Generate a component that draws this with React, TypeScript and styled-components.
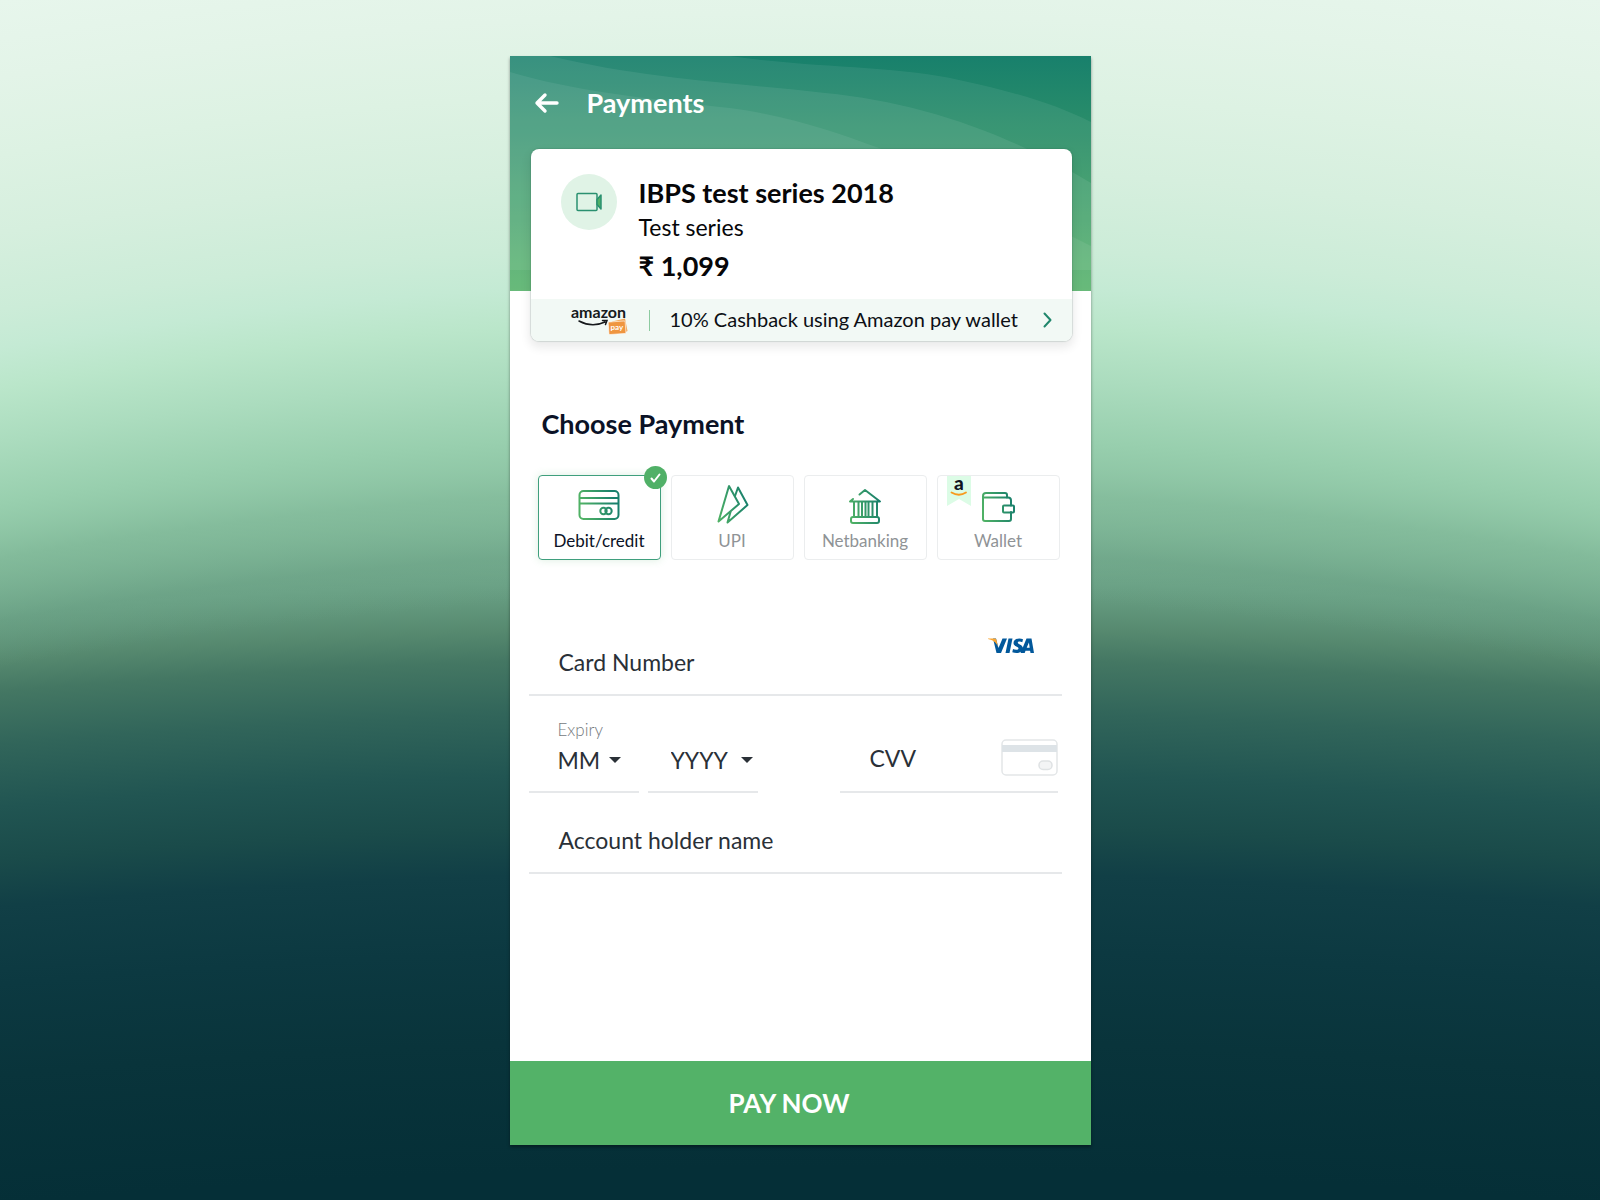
import React, { useState } from "react";
import styled, { createGlobalStyle, css } from "styled-components";

const GlobalStyle = createGlobalStyle`
  *, *::before, *::after { box-sizing: border-box; }
  body {
    margin: 0;
    font-family: "Lato", "Noto Sans", sans-serif;
    color: #0b1226;
  }
  button, input, select { font: inherit; color: inherit; }
`;

const Backdrop = styled.main`
  min-height: 100vh;
  display: flex;
  justify-content: center;
  align-items: flex-start;
  padding: 56px 24px;
  background:
    radial-gradient(
      circle 5100px at 50% 5000px,
      rgba(86, 137, 111, 0) 4406px,
      rgba(107, 162, 134, 0.4) 4452px,
      rgba(131, 187, 155, 0.75) 4513px,
      #98cfae 4567px,
      #abdcbe 4628px,
      #bae6ca 4681px,
      #c4ead4 4720px,
      #ccecd8 4758px,
      #d6efde 4834px,
      #ddf2e3 4911px,
      #e3f4e8 4987px,
      #e7f6ec 5064px
    ),
    radial-gradient(
      circle 10100px at 50% 10000px,
      #052f37 8832px,
      #09343b 8961px,
      #0c3941 9052px,
      #113f46 9129px,
      #1a4b4a 9175px,
      #215552 9228px,
      #31655a 9290px,
      #447763 9343px,
      #56896f 9374px,
      #6ba286 9420px,
      #83bb9b 9481px,
      #98cfae 9535px
    );
`;

const Phone = styled.form`
  width: 100%;
  max-width: 581px;
  min-height: calc(100vh - 111px);
  display: flex;
  flex-direction: column;
  background: #fff;
  box-shadow: 0 2px 3px rgba(0, 0, 0, 0.4);
`;

const Header = styled.header`
  position: relative;
  height: 235px;
  padding: 31px 24px;
  color: #fff;
  background: linear-gradient(#18806c, #2f9169 38%, #50b065);
`;

const Waves = styled.svg`
  position: absolute;
  inset: 0;
  width: 100%;
  height: 100%;
`;

const TitleBar = styled.div`
  position: relative;
  display: flex;
  align-items: center;
  gap: 27px;
`;

const IconButton = styled.button`
  display: flex;
  padding: 0;
  border: 0;
  background: none;
  cursor: pointer;
`;

const PageTitle = styled.h1`
  margin: 0;
  font-size: 27px;
  line-height: 32px;
  font-weight: 700;
`;

const OrderCard = styled.section`
  position: relative;
  margin: -142px 19px 0 21px;
  overflow: hidden;
  border-radius: 8px;
  background: #fff;
  box-shadow: 0 0 1px 1px rgba(40, 90, 70, 0.15), 0 5px 10px 2px rgba(0, 0, 0, 0.08);
`;

const OrderBody = styled.div`
  display: flex;
  align-items: flex-start;
  gap: 22px;
  height: 150px;
  padding: 25px 30px 0;
`;

const Avatar = styled.div`
  display: grid;
  place-items: center;
  width: 56px;
  height: 56px;
  border-radius: 50%;
  background: #e0f3e6;
`;

const OrderText = styled.div`
  padding-top: 2px;
  color: #060608;
`;

const OrderName = styled.h2`
  margin: 0;
  font-size: 27px;
  line-height: 34px;
  font-weight: 700;
`;

const OrderKind = styled.p`
  margin: 0;
  font-size: 23px;
  line-height: 34px;
`;

const Price = styled.p`
  margin: 0;
  font-size: 27px;
  line-height: 44px;
  font-weight: 700;
`;

const Offer = styled.a`
  display: flex;
  align-items: center;
  height: 42px;
  padding: 0 20px 0 40px;
  background: #f2f9f5;
  color: #0c0f14;
  font-size: 20px;
  line-height: 28px;
  text-decoration: none;
`;

const PartnerLogo = styled.svg`
  flex: none;
  overflow: visible;
`;

const OfferDivider = styled.span`
  width: 1px;
  height: 21px;
  margin: 0 20px 0 21px;
  background: #8ccba0;
`;

const OfferText = styled.span`
  flex: 1;
  padding-bottom: 2px;
`;

const SectionTitle = styled.legend`
  padding: 0 4px;
  font-size: 27px;
  line-height: 34px;
  font-weight: 700;
`;

const Methods = styled.fieldset`
  margin: 66px 31px 0 28px;
  padding: 0;
  border: 0;
`;

const MethodGrid = styled.div`
  display: grid;
  grid-template-columns: repeat(4, 1fr);
  gap: 10px;
  padding-top: 34px;
`;

const Method = styled.label<{ $active: boolean }>`
  position: relative;
  display: flex;
  flex-direction: column;
  align-items: center;
  height: 85px;
  padding-top: 8px;
  border: 1px solid #ebedee;
  border-radius: 4px;
  color: #8f9396;
  font-size: 17px;
  line-height: 26px;
  cursor: pointer;
  ${(p) =>
    p.$active &&
    css`
      border-color: #3f9f7d;
      color: #0b1226;
      box-shadow: 0 0 8px rgba(80, 176, 101, 0.2);
    `}
`;

const HiddenRadio = styled.input`
  position: absolute;
  inset: 0;
  margin: 0;
  opacity: 0;
  cursor: pointer;
`;

const MethodIcon = styled.svg`
  width: 44px;
  height: 44px;
  fill: none;
  stroke: url(#brand);
  stroke-width: 2;
  stroke-linecap: round;
  stroke-linejoin: round;
`;

const CheckBadge = styled.span`
  position: absolute;
  top: -10px;
  right: -7px;
  display: grid;
  place-items: center;
  width: 23px;
  height: 23px;
  border-radius: 50%;
  background: #50b067;
`;

const Ribbon = styled.svg`
  position: absolute;
  top: 0;
  left: 9px;
  overflow: visible;
`;

const Fields = styled.div`
  display: flex;
  flex-direction: column;
  margin: 55px 29px 0 19px;
  color: #2a3037;
  font-size: 23px;
  line-height: 32px;
`;

const TextField = styled.label`
  display: flex;
  align-items: flex-end;
  gap: 12px;
  height: 81px;
  padding: 0 28px 16px 30px;
  border-bottom: 2px solid #e6e8ea;
`;

const TextInput = styled.input`
  flex: 1;
  min-width: 0;
  height: 32px;
  padding: 0;
  border: 0;
  outline: 0;
  background: none;
`;

const BrandMark = styled.svg`
  flex: none;
  margin-bottom: 24px;
`;

const SplitRow = styled.div`
  display: flex;
  justify-content: space-between;
  align-items: flex-end;
  height: 97px;
  padding-right: 4px;
`;

const Expiry = styled.div`
  display: grid;
  grid-template-columns: 110px 110px;
  column-gap: 9px;
`;

const SmallLabel = styled.label`
  grid-column: 1 / -1;
  padding-left: 29px;
  color: #74797d;
  font-size: 17px;
  line-height: 24px;
  font-weight: 300;
`;

const SelectBox = styled.div<{ $indent: number }>`
  display: flex;
  align-items: center;
  height: 51px;
  padding: 0 0 14px ${(p) => p.$indent}px;
  border-bottom: 2px solid #e6e8ea;
`;

const Select = styled.select<{ $width: number }>`
  appearance: none;
  width: ${(p) => p.$width}px;
  height: 32px;
  padding: 0;
  border: 0;
  background: none;
  cursor: pointer;
`;

const Caret = styled.span`
  border: 6px solid transparent;
  border-top-color: #2a3037;
  border-bottom: 0;
  pointer-events: none;
`;

const CvvField = styled.label`
  display: flex;
  align-items: center;
  gap: 12px;
  width: 218px;
  height: 58px;
  padding: 0 0 10px 30px;
  border-bottom: 2px solid #e6e8ea;
`;

const PayButton = styled.button`
  height: 84px;
  margin-top: auto;
  padding: 0 22px 0 0;
  border: 0;
  background: #53b268;
  color: #fff;
  font-size: 26px;
  line-height: 32px;
  font-weight: 700;
  cursor: pointer;
`;

const methods = [
  {
    id: "card",
    name: "Debit/credit",
    icon: (
      <>
        <rect x="2.5" y="7" width="39" height="28" rx="4" />
        <path d="M3 14h38M3 19.5h38" />
        <circle cx="26.5" cy="27" r="3.2" />
        <circle cx="31.5" cy="27" r="3.2" />
      </>
    ),
  },
  {
    id: "upi",
    name: "UPI",
    icon: (
      <>
        <path d="M19 2 8.5 37.5 29 20Z" />
        <path d="M25 12 28 3.500 37.500 21 17.500 38.500 20.500 28" />
      </>
    ),
  },
  {
    id: "bank",
    name: "Netbanking",
    icon: (
      <>
        <path d="M16.5 10.5 22 6 37 17.500H7L10 15" />
        <path d="M11 18v14M15.500 18v14M19 18v14M22.500 18v14M25.500 18v14M29.500 18v14M34 18v14" />
        <rect x="8" y="33" width="28" height="6" rx="2" />
      </>
    ),
  },
  {
    id: "wallet",
    name: "Wallet",
    icon: (
      <>
        <path d="M35 28V35a2 2 0 0 1-2 2H9a2 2 0 0 1-2-2V12a3 3 0 0 1 3-3h19a2 2 0 0 1 2 2v2.500" />
        <path d="M7 13.500h25a3 3 0 0 1 3 3v5" />
        <rect x="27" y="21.500" width="11" height="7" rx="1" />
      </>
    ),
  },
];

export default function App() {
  const [method, setMethod] = useState("card");

  return (
    <>
      <GlobalStyle />
      <Backdrop>
        <Phone onSubmit={(e) => e.preventDefault()}>
          <Header>
            <Waves viewBox="0 0 581 235" preserveAspectRatio="none" aria-hidden="true">
              <path fill="#fff" fillOpacity=".07" d="M220 0C300 12 390 10 449 24C505 36 545 48 581 66V235H0V0Z" />
              <path fill="#fff" fillOpacity=".08" d="M40 0C140 24 230 27 315 37C410 46 500 78 581 127V235H0V0Z" />
              <path fill="#fff" fillOpacity=".07" d="M0 16C60 34 130 42 220 52C280 60 325 76 369 92C450 124 520 160 581 190V214H0Z" />
            </Waves>
            <TitleBar>
              <IconButton type="button" aria-label="Back">
                <svg width="26" height="24" viewBox="0 0 26 24" fill="none" stroke="#fff" strokeWidth="3.4" strokeLinecap="round" strokeLinejoin="round">
                  <path d="M23 12H3M11 4 3 12l8 8" />
                </svg>
              </IconButton>
              <PageTitle>Payments</PageTitle>
            </TitleBar>
          </Header>

          <OrderCard>
            <OrderBody>
              <Avatar>
                <svg width="26" height="20" viewBox="0 0 26 20" fill="none" stroke="#2a9070" strokeWidth="1.5" strokeLinejoin="round">
                  <rect x="1" y="1.5" width="20" height="17" rx="1" />
                  <path fill="#50b067" d="M21 7.5 25 3v14l-4-4.5Z" />
                </svg>
              </Avatar>
              <OrderText>
                <OrderName>IBPS test series 2018</OrderName>
                <OrderKind>Test series</OrderKind>
                <Price>₹ 1,099</Price>
              </OrderText>
            </OrderBody>
            <Offer href="#offer">
              <PartnerLogo width="57" height="32" viewBox="0 0 57 32" role="img" aria-label="amazon pay">
                <text x="0" y="14" fill="#16191c" fontFamily="Lato, sans-serif" fontSize="16" fontWeight="700">amazon</text>
                <path fill="none" stroke="#16191c" strokeWidth="1.5" strokeLinecap="round" d="M8 17Q21 24 34 18M31.5 16.5h4.500l-1.500 4" />
                <path fill="#f2a75a" d="M41 17.500 54 14.500 56.500 27 53 29Z" />
                <rect x="37.5" y="17.5" width="17" height="12.500" rx="1" fill="#ef9540" stroke="#fff" strokeWidth=".6" transform="rotate(-4 46 23)" />
                <text x="39.5" y="26" fill="#fff" fontFamily="Lato, sans-serif" fontSize="8" fontWeight="700">pay</text>
              </PartnerLogo>
              <OfferDivider />
              <OfferText>10% Cashback using Amazon pay wallet</OfferText>
              <svg width="9" height="16" viewBox="0 0 9 16" fill="none" stroke="#21876c" strokeWidth="2" strokeLinecap="round" strokeLinejoin="round" aria-hidden="true">
                <path d="m1.5 1.5 6 6.5-6 6.5" />
              </svg>
            </Offer>
          </OrderCard>

          <Methods>
            <SectionTitle>Choose Payment</SectionTitle>
            <MethodGrid>
              {methods.map((m) => (
                <Method key={m.id} $active={m.id === method}>
                  <HiddenRadio type="radio" name="method" checked={m.id === method} onChange={() => setMethod(m.id)} />
                  {m.id === "wallet" && (
                    <Ribbon width="24" height="30" viewBox="0 0 24 30" aria-hidden="true">
                      <path fill="#dcfce6" d="M0 0h24v30l-12-7L0 30Z" />
                      <text x="7" y="14" fill="#101522" fontFamily="Lato, sans-serif" fontSize="19" fontWeight="900">a</text>
                      <path fill="none" stroke="#f79a1e" strokeWidth="1.8" strokeLinecap="round" d="M4.5 16.5Q12 21 19 16.5" />
                    </Ribbon>
                  )}
                  <MethodIcon viewBox="0 0 44 44" aria-hidden="true">
                    <defs>
                      <linearGradient id="brand" gradientUnits="userSpaceOnUse" x1="6" y1="26" x2="38" y2="18">
                        <stop stopColor="#4fb165" />
                        <stop offset="1" stopColor="#187f6c" />
                      </linearGradient>
                    </defs>
                    {m.icon}
                  </MethodIcon>
                  {m.name}
                  {m.id === method && (
                    <CheckBadge>
                      <svg width="11" height="10" viewBox="0 0 11 10" fill="none" stroke="#fff" strokeWidth="2" strokeLinecap="round" strokeLinejoin="round">
                        <path d="M1.5 5.5 4 8.5 9.5 1.5" />
                      </svg>
                    </CheckBadge>
                  )}
                </Method>
              ))}
            </MethodGrid>
          </Methods>

          <Fields>
            <TextField>
              Card Number
              <TextInput inputMode="numeric" autoComplete="cc-number" />
              <BrandMark width="46" height="24" viewBox="0 0 46 24" role="img" aria-label="Visa">
                <path fill="#02589b" d="M8 8.5H5L8.5 23h4.500L19 8.5h-4.500L10.500 18ZM20.500 8.5 17.500 23h4L24.500 8.5ZM35 9.200C31 7.500 25.500 8.800 25.500 13c0 3.500 5 3.500 5 5.500 0 1.700-3.500 1.500-5.500.5L24.300 22.200C29 24 34.800 22.800 34.800 18c0-3.500-5-3.600-5-5.300 0-1.400 2.700-1.400 4.500-.5ZM38.500 8.500 32.500 23h4.200l.8-2.300h4.600L42.500 23h3.500L43.500 8.500ZM38.700 17.800l2.200-5.300.8 5.300Z" />
                <path fill="#f9a533" d="M0 8.5h6.500c1.200 0 1.800.5 2 1.500L10 17C8.500 12.500 5 10 0 9Z" />
              </BrandMark>
            </TextField>

            <SplitRow>
              <Expiry>
                <SmallLabel htmlFor="month">Expiry</SmallLabel>
                <SelectBox $indent={29}>
                  <Select id="month" $width={51} defaultValue="MM">
                    <option>MM</option>
                  </Select>
                  <Caret />
                </SelectBox>
                <SelectBox $indent={23}>
                  <Select aria-label="Expiry year" $width={70} defaultValue="YYYY">
                    <option>YYYY</option>
                  </Select>
                  <Caret />
                </SelectBox>
              </Expiry>
              <CvvField>
                CVV
                <TextInput inputMode="numeric" autoComplete="cc-csc" />
                <svg width="57" height="38" viewBox="0 0 57 38" aria-hidden="true">
                  <rect x="1" y="1" width="55" height="35" rx="4" fill="#fff" stroke="#e3e6e8" strokeWidth="1.5" />
                  <path fill="#dde3e7" d="M1 6h55v7H1Z" />
                  <rect x="38" y="22" width="13" height="8.5" rx="4" fill="#f3f4f5" stroke="#dfe2e4" strokeWidth="1.5" />
                </svg>
              </CvvField>
            </SplitRow>

            <TextField>
              Account holder name
              <TextInput autoComplete="cc-name" />
            </TextField>
          </Fields>

          <PayButton type="submit">PAY NOW</PayButton>
        </Phone>
      </Backdrop>
    </>
  );
}
